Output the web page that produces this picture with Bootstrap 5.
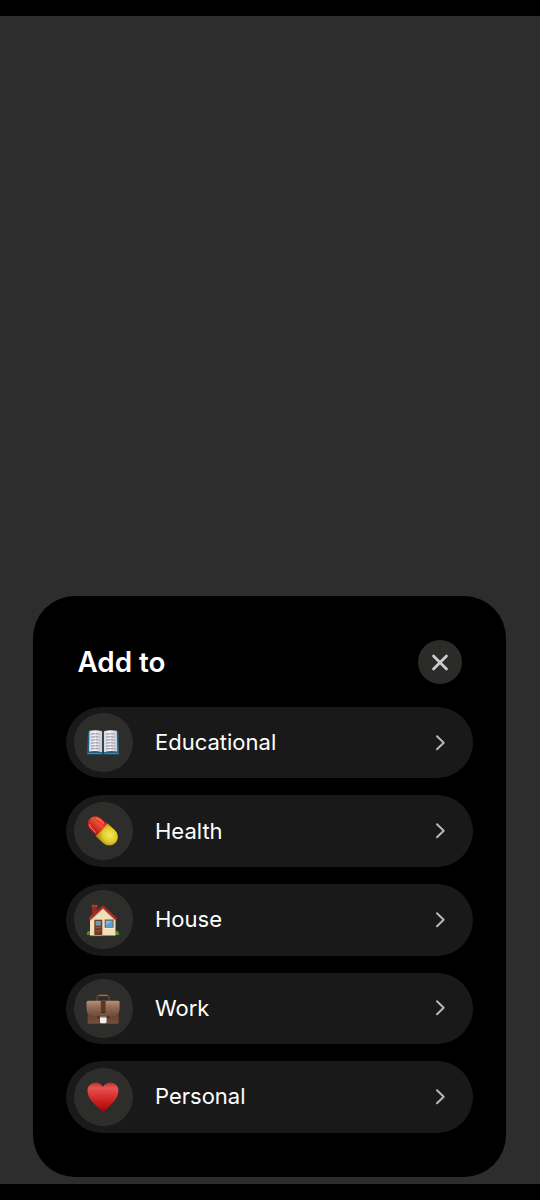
<!DOCTYPE html>
<html lang="en">
<head>
<meta charset="utf-8">
<meta name="viewport" content="width=device-width, initial-scale=1">
<title>Add to</title>
<link href="https://cdn.jsdelivr.net/npm/bootstrap@5.3.0/dist/css/bootstrap.min.css" rel="stylesheet">
<style>
body{font-family:Inter,"Liberation Sans",sans-serif;background:#000;color:#fff}
.screen{height:1200px;padding:16px 0;overflow:hidden}
.backdrop{background:#2d2d2d;padding:0 34px 7px 33px}
.sheet{background:#000;border-radius:42px;height:581px;padding:44px 33px 0}
.sheet-head{height:44.4px;padding:0 11px 0 11.500px}
.sheet-title{font-size:27.8px;font-weight:600;line-height:1;padding-top:2px}
.close-btn{width:44px;height:44.4px;background:#2b2b2a}
.choices{margin-top:22.400px;gap:17px}
.choice{height:71.6px;background:#191919;padding:0 23px 0 8px;font-size:22px;line-height:1;color:#fff}
.choice-icon{width:58.600px;height:58.600px;background:#2d2d2c;margin-right:22.400px}
.choice-name{position:relative;top:-.5px}
</style>
</head>
<body>
<main class="screen d-flex flex-column">
<div class="backdrop flex-grow-1 d-flex flex-column justify-content-end">
<section class="sheet">
  <header class="sheet-head d-flex align-items-center justify-content-between">
    <h1 class="sheet-title m-0">Add to</h1>
    <button class="close-btn btn border-0 p-0 rounded-circle d-flex align-items-center justify-content-center" aria-label="Close">
      <svg width="20" height="20" viewBox="0 0 20 20" fill="none" stroke="#cdcdcd" stroke-width="2.7" stroke-linecap="round"><path d="M3.500 4l13 13M16.500 4l-13 13"/></svg>
    </button>
  </header>
  <div class="choices d-flex flex-column">
    <a class="choice rounded-pill d-flex align-items-center text-decoration-none" href="#">
      <span class="choice-icon rounded-circle d-flex align-items-center justify-content-center flex-shrink-0">
        <svg width="40" height="40" viewBox="0 0 40 40">
          <defs><linearGradient id="pageL"><stop offset="0" stop-color="#d5d4dc"/><stop offset=".4" stop-color="#f3f2f8"/><stop offset="1" stop-color="#c9c8d2"/></linearGradient></defs>
          <path d="M5 8.500h30.500l.5 23H22l-2 .8-2-.8H4z" fill="#1f5f80"/>
          <path d="M4.400 30.500h31.200" stroke="#4b96b5" stroke-width=".8"/>
          <path d="M6.500 7.800Q13 6.500 19.300 8.200V29.400Q13 27.200 6 28.600z" fill="url(#pageL)"/>
          <path d="M33.800 7.800Q27 6.500 20.700 8.200V29.400Q27 27.200 34.300 28.600z" fill="url(#pageL)"/>
          <path d="M20 8v22" stroke="#222229" stroke-width="1.300"/>
          <path d="M8 11.200q5-.8 8.500 0M8 14.200q5-.8 8.500 0M8 17.200q5-.8 8.600 0M8 20.200q5-.8 8.700 0M8 23.200q5-.8 8.800 0M8 26q5-.8 9 0M23 11.200q5-.8 9 0M23 14.200q5-.8 9 0M23 17.200q5-.8 9 0M23 20.200q5-.8 9 0M23 23.200q5-.8 9 0M23 26q5-.8 9.500 0" fill="none" stroke="#7c7a88" stroke-width=".9" stroke-dasharray="4 .5 2.500 .6"/>
          <path d="M18 30.200h4l-2 2z" fill="#163c43"/>
        </svg>
      </span>
      <span class="choice-name flex-grow-1">Educational</span>
      <svg width="20" height="20" viewBox="0 0 20 20" fill="none" stroke="#b8b8b8" stroke-width="2" stroke-linecap="round" stroke-linejoin="round"><path d="M7 3.300l6.700 6.500-6.700 6.500"/></svg>
    </a>
    <a class="choice rounded-pill d-flex align-items-center text-decoration-none" href="#">
      <span class="choice-icon rounded-circle d-flex align-items-center justify-content-center flex-shrink-0">
        <svg width="40" height="40" viewBox="0 0 40 40">
          <defs>
            <linearGradient id="pillRed" x1="0" y1="0" x2="0" y2="1"><stop offset="0" stop-color="#d2251a"/><stop offset=".35" stop-color="#ee4d38"/><stop offset="1" stop-color="#b0120e"/></linearGradient>
            <radialGradient id="pillYellow" cx=".5" cy=".4" r=".65"><stop offset="0" stop-color="#f8e85a"/><stop offset=".6" stop-color="#e2ca2b"/><stop offset="1" stop-color="#a88f12"/></radialGradient>
          </defs>
          <g transform="rotate(43 20 20)">
            <path d="M21 12H9.500a8 8 0 0 0-7.500 8 8 8 0 0 0 7.500 8H21z" fill="url(#pillRed)"/>
            <path d="M18 11.300H28.500a8.700 8.700 0 0 1 0 17.400H18q1.700-8.700 0-17.400z" fill="url(#pillYellow)"/>
            <path d="M6 24.500q2 1.500 4.500 1.500h5" fill="none" stroke="#f5a59a" stroke-width=".8" stroke-linecap="round"/>
            <path d="M6.500 15q3-1.500 8.500-1" fill="none" stroke="#fa7c63" stroke-width="1.200" stroke-linecap="round"/>
          </g>
        </svg>
      </span>
      <span class="choice-name flex-grow-1">Health</span>
      <svg width="20" height="20" viewBox="0 0 20 20" fill="none" stroke="#b8b8b8" stroke-width="2" stroke-linecap="round" stroke-linejoin="round"><path d="M7 3.300l6.700 6.500-6.700 6.500"/></svg>
    </a>
    <a class="choice rounded-pill d-flex align-items-center text-decoration-none" href="#">
      <span class="choice-icon rounded-circle d-flex align-items-center justify-content-center flex-shrink-0">
        <svg width="40" height="40" viewBox="0 0 40 40">
          <path d="M3.800 35q-.5-4 2.500-4.300 1.800.8 2.200 4.300zM31.500 35q.2-4 2.500-4.300 2.600 1 2.200 4.300z" fill="#4d8c2c"/>
          <path d="M7 17L20 6l12.500 13v16.300H7z" fill="#f0dfb8"/>
          <path d="M7.500 20.500L20 8.500l12.500 12" fill="none" stroke="#cdb28a" stroke-width="1.200"/>
          <path d="M9 6.500h5v6l-5 5z" fill="#8b2e26"/>
          <path d="M8.500 4.800h6v2.200h-6z" fill="#a93e33"/>
          <path d="M7 18.700L20 6.700l12.700 12" fill="none" stroke="#a52b28" stroke-width="2.500" stroke-linecap="round" stroke-linejoin="round"/>
          <path d="M11.300 19.700h8V35h-8z" fill="#733c24"/>
          <path d="M12.600 21h5.300v4.600h-5.300z" fill="#699cba"/>
          <path d="M12.600 27.500h5.300M12.600 31h5.300" stroke="#97563a" stroke-width="1"/>
          <path d="M21.700 19.500h8.800v8.500h-8.800z" fill="#7b5237"/>
          <path d="M22.700 20.500h6.900v6.500h-6.900z" fill="#5c9fd3"/>
          <path d="M23 21h6l-6 4z" fill="#83bbe2"/>
          <path d="M21.300 28.200h9.500" stroke="#fff1d0" stroke-width="1"/>
          <path d="M7.200 35h13v1.100h-13z" fill="#a8988b"/>
          <path d="M20.200 35h12.300v.7H20.200z" fill="#b79d73"/>
        </svg>
      </span>
      <span class="choice-name flex-grow-1">House</span>
      <svg width="20" height="20" viewBox="0 0 20 20" fill="none" stroke="#b8b8b8" stroke-width="2" stroke-linecap="round" stroke-linejoin="round"><path d="M7 3.300l6.700 6.500-6.700 6.500"/></svg>
    </a>
    <a class="choice rounded-pill d-flex align-items-center text-decoration-none" href="#">
      <span class="choice-icon rounded-circle d-flex align-items-center justify-content-center flex-shrink-0">
        <svg width="40" height="40" viewBox="0 0 40 40">
          <defs>
            <linearGradient id="leatherTop" x1="0" y1="0" x2="0" y2="1"><stop offset="0" stop-color="#b98f75"/><stop offset=".45" stop-color="#8e6852"/><stop offset="1" stop-color="#6b4836"/></linearGradient>
            <linearGradient id="leather" x1="0" y1="0" x2="0" y2="1"><stop offset="0" stop-color="#5a3b2b"/><stop offset="1" stop-color="#75503b"/></linearGradient>
          </defs>
          <path d="M14.200 13V9.500q0-2 2-2h8q2 0 2 2V13" fill="none" stroke="#63402f" stroke-width="1.600"/>
          <path d="M16 7.300h8.500" stroke="#aa806a" stroke-width="1"/>
          <path d="M4.700 20h31v14.500q0 1.300-1.300 1.300H6Q4.700 35.800 4.700 34.500z" fill="url(#leather)"/>
          <path d="M5 12.800h30.300q1.300 0 1.300 1.500v6.200q0 6-5 7.500Q20 30 8.500 28 3.500 26.500 3.500 20.500v-6.200q0-1.500 1.500-1.500z" fill="url(#leatherTop)"/>
          <path d="M17.800 13h4.800v12h-4.800z" fill="#5b3828"/>
          <path d="M18.400 24.500h3.600" stroke="#392118"/>
          <path d="M14.500 28.300h12v2h-12z" fill="#452c21"/>
          <path d="M17 28.800h6.500v5q0 1.500-1.500 1.500h-3.500q-1.500 0-1.500-1.500z" fill="#f0eeee"/>
          <path d="M17.500 29.300h5.500" stroke="#a19792"/>
        </svg>
      </span>
      <span class="choice-name flex-grow-1">Work</span>
      <svg width="20" height="20" viewBox="0 0 20 20" fill="none" stroke="#b8b8b8" stroke-width="2" stroke-linecap="round" stroke-linejoin="round"><path d="M7 3.300l6.700 6.500-6.700 6.500"/></svg>
    </a>
    <a class="choice rounded-pill d-flex align-items-center text-decoration-none" href="#">
      <span class="choice-icon rounded-circle d-flex align-items-center justify-content-center flex-shrink-0">
        <svg width="40" height="40" viewBox="0 0 40 40">
          <defs><linearGradient id="heartRed" x1="0" y1="0" x2="0" y2="1"><stop offset="0" stop-color="#b92b2b"/><stop offset=".18" stop-color="#e65450"/><stop offset=".6" stop-color="#cf2323"/><stop offset="1" stop-color="#a80000"/></linearGradient></defs>
          <path d="M20 35.300C16.500 31 4.500 23.500 4.500 13.700 4.500 4.500 16.500 2.500 20 10 23.500 2.500 35.500 4.500 35.500 13.700 35.500 23.500 23.500 31 20 35.300z" fill="url(#heartRed)"/>
        </svg>
      </span>
      <span class="choice-name flex-grow-1">Personal</span>
      <svg width="20" height="20" viewBox="0 0 20 20" fill="none" stroke="#b8b8b8" stroke-width="2" stroke-linecap="round" stroke-linejoin="round"><path d="M7 3.300l6.700 6.500-6.700 6.500"/></svg>
    </a>
  </div>
</section>
</div>
</main>
<script src="https://cdn.jsdelivr.net/npm/bootstrap@5.3.0/dist/js/bootstrap.bundle.min.js"></script>
</body>
</html>
